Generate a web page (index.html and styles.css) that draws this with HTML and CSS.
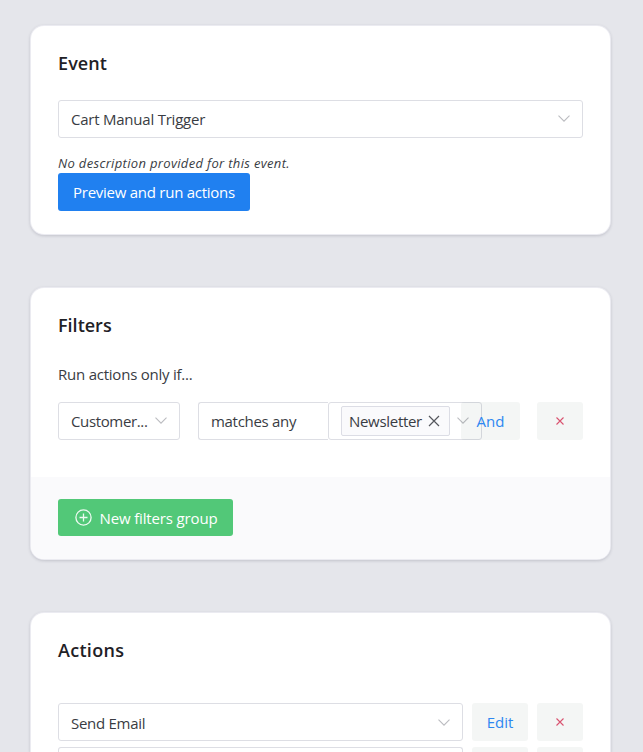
FILE: index.html
```html
<!DOCTYPE html>
<html lang="en">
<head>
<meta charset="utf-8">
<title>Automation</title>
<link rel="stylesheet" href="styles.css">
</head>
<body>
<main class="page">
  <section class="card card-event">
    <h2 class="t-event">Event</h2>
    <div class="field field-event"><span class="t-trigger">Cart Manual Trigger</span>
      <svg class="chevron" viewBox="0 0 12 7"><path d="M.5.7 6 6.200 11.500.7"/></svg>
    </div>
    <p class="note"><em>No description provided for this event.</em></p>
    <button class="btn btn-primary"><span class="t-preview">Preview and run actions</span></button>
  </section>

  <section class="card card-filters">
    <div class="card-body">
      <h2 class="t-filters">Filters</h2>
      <p class="lead"><span class="t-lead">Run actions only if...</span></p>
      <div class="row">
        <div class="field field-customer"><span class="t-customer">Customer...</span>
          <svg class="chevron" viewBox="0 0 12 7"><path d="M.5.7 6 6.200 11.500.7"/></svg>
        </div>
        <div class="field field-match"><span class="t-match">matches any</span></div>
        <div class="field field-tags">
          <span class="tag"><span class="t-tag">Newsletter</span>
            <svg class="tag-x" viewBox="0 0 12 12"><path d="M1 1l10 10M11 1L1 11"/></svg>
          </span>
          <svg class="chevron" viewBox="0 0 12 7"><path d="M.5.7 6 6.200 11.500.7"/></svg>
        </div>
        <button class="btn btn-soft btn-and"><span class="t-and">And</span></button>
        <button class="btn btn-soft btn-remove" aria-label="Remove"><svg class="cross" viewBox="0 0 8 8"><path d="M.5.5l7 7M7.500.5l-7 7"/></svg></button>
      </div>
    </div>
    <footer class="card-footer">
      <button class="btn btn-success">
        <svg class="plus" viewBox="0 0 17 17"><circle cx="8.500" cy="8.500" r="7.600"/><path d="M8.500 4.500v8M4.500 8.500h8"/></svg>
        <span class="t-new">New filters group</span>
      </button>
    </footer>
  </section>

  <section class="card card-actions">
    <h2 class="t-actions">Actions</h2>
    <div class="row row-action">
      <div class="field field-action"><span class="t-send">Send Email</span>
        <svg class="chevron" viewBox="0 0 12 7"><path d="M.5.7 6 6.200 11.500.7"/></svg>
      </div>
      <button class="btn btn-soft btn-edit"><span class="t-edit">Edit</span></button>
      <button class="btn btn-soft btn-remove" aria-label="Remove"><svg class="cross" viewBox="0 0 8 8"><path d="M.5.5l7 7M7.500.5l-7 7"/></svg></button>
    </div>
    <div class="row row-cut">
      <div class="field field-action"></div>
      <div class="btn btn-soft btn-edit"></div>
      <div class="btn btn-soft btn-remove"></div>
    </div>
  </section>
</main>
</body>
</html>
```
FILE: styles.css
```css
* { box-sizing: border-box; }

body {
  margin: 0;
  background: #e5e6eb;
  color: #393c43;
  font: 15px/22px "Open Sans", "Noto Sans", sans-serif;
}

.page {
  display: flex;
  flex-direction: column;
  gap: 54px;
  height: 752px;
  overflow: hidden;
  padding: 26px 33px 0 31px;
}

.card {
  flex: none;
  padding: 0 27px;
  border-radius: 13px;
  background: #fff;
  box-shadow: 0 0 0 1px #ebebf1, 0 1px 3px 1px rgba(60, 62, 80, .2);
}

.card-event { height: 208px; }
.card-filters { height: 271px; padding: 0; overflow: hidden; }
.card-body { height: 189px; padding: 0 27px; }
.card-footer { height: 82px; padding: 22px 27px; background: #fafafc; }
.card-actions { height: 139px; border-radius: 13px 13px 0 0; }

h2 {
  margin: 0;
  padding-top: 24px;
  font-size: 18px;
  line-height: 26px;
  font-weight: 600;
  color: #1f2126;
}

span { white-space: nowrap; }

.t-event { letter-spacing: .1px; }
.t-actions { letter-spacing: .3px; }
.t-trigger { letter-spacing: -.23px; }
.t-preview { letter-spacing: -.26px; }
.t-lead { letter-spacing: -.23px; }
.t-customer { letter-spacing: -.36px; }
.t-match { letter-spacing: -.3px; }
.t-tag { letter-spacing: -.3px; }
.t-new { letter-spacing: -.15px; }
.t-send { position: relative; top: 1px; letter-spacing: -.28px; }

.field {
  display: flex;
  align-items: center;
  justify-content: space-between;
  flex: none;
  height: 38px;
  padding: 0 12px 1px;
  border: 1px solid #dddee4;
  border-radius: 3px;
  background: #fff;
}

.chevron {
  flex: none;
  width: 12px;
  height: 7px;
  fill: none;
  stroke: #bbbcc0;
  stroke-width: 1.1;
}

.field-event { margin-top: 24px; }

.note {
  margin: 16px 0 0;
  height: 19px;
  font-size: 13px;
  line-height: 19px;
  letter-spacing: .33px;
}

.btn {
  display: flex;
  align-items: center;
  justify-content: center;
  flex: none;
  height: 38px;
  padding: 0 0 1px;
  border: 0;
  border-radius: 3px;
  font: inherit;
}

.btn-primary { width: 192px; background: #2080f0; color: #fff; }
.btn-success { width: 175px; height: 37px; gap: 8px; padding: 0 0 0 1px; background: #52c878; color: #fff; }
.btn-soft { background: rgba(36, 70, 62, .05); color: #2d87f1; }
.btn-remove { width: 46px; margin-left: auto; }
.btn-and { width: 59px; margin-left: -21px; position: relative; }
.btn-edit { width: 56px; margin-left: 9px; }

.cross { width: 8px; height: 8px; margin-top: 1px; fill: none; stroke: #d9536f; stroke-width: 1.1; }
.plus { width: 17px; height: 17px; fill: none; stroke: #eefaf2; stroke-width: 1.3; }

.lead { margin: 25px 0 0; height: 22px; }
.row { display: flex; }
.card-body .row { margin-top: 17px; }
.field-customer { width: 122px; margin-right: 18px; }
.field-match { width: 130px; border-right: 0; border-radius: 3px 0 0 3px; }
.field-tags { width: 154px; }

.tag {
  display: flex;
  align-items: center;
  justify-content: space-between;
  width: 109px;
  height: 30px;
  padding: 0 9px 0 7px;
  border: 1px solid #dcdde5;
  border-radius: 2px;
  background: #fafafc;
}

.tag-x { flex: none; width: 12px; height: 12px; fill: none; stroke: #55575d; stroke-width: 1.2; }

.row-action { height: 38px; margin: 40px 0 6px; }
.row-action .field { padding-top: 1px; }
.field-action { width: 405px; }

.row-cut { height: 5px; overflow: hidden; }
.row-cut .field, .row-cut .btn { height: 5px; padding: 0; border-bottom: 0; border-radius: 3px 3px 0 0; }
```
